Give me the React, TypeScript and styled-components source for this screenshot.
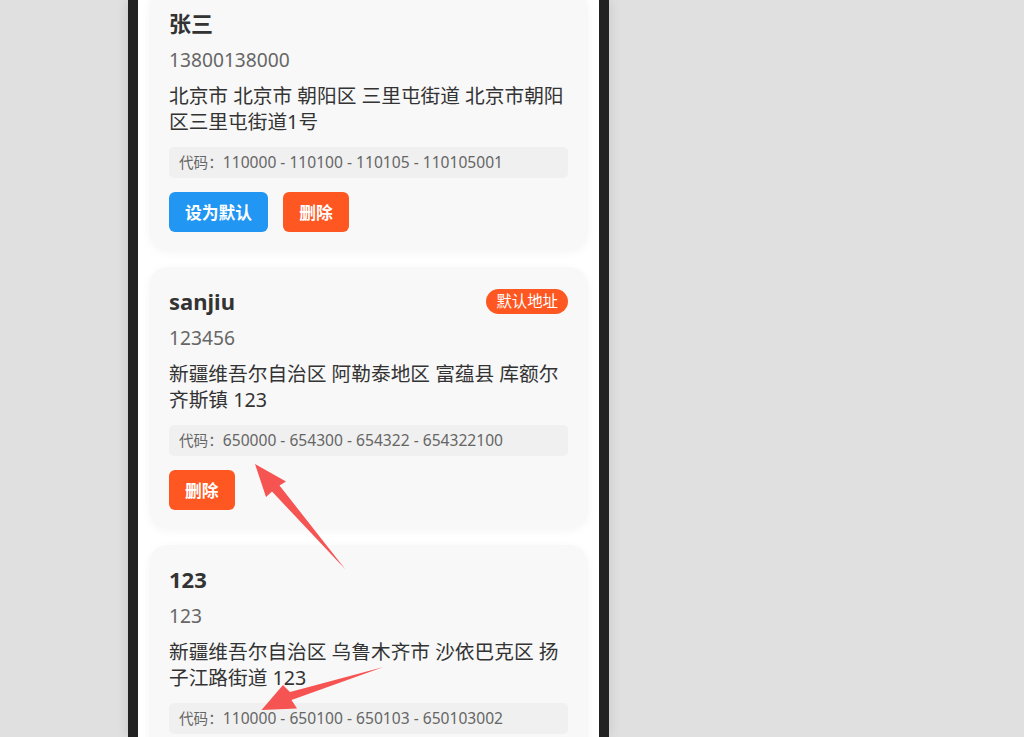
import styled, { createGlobalStyle } from 'styled-components';

type Address = {
	id: number;
	name: string;
	phone: string;
	detail: string;
	codes: string;
	isDefault?: boolean;
};

const ADDRESS_LIST: Address[] = [
	{
		id: 1,
		name: '张三',
		phone: '13800138000',
		detail: '北京市 北京市 朝阳区 三里屯街道 北京市朝阳区三里屯街道1号',
		codes: '110000 - 110100 - 110105 - 110105001',
	},
	{
		id: 2,
		name: 'sanjiu',
		phone: '123456',
		detail: '新疆维吾尔自治区 阿勒泰地区 富蕴县 库额尔齐斯镇 123',
		codes: '650000 - 654300 - 654322 - 654322100',
		isDefault: true,
	},
	{
		id: 3,
		name: '123',
		phone: '123',
		detail: '新疆维吾尔自治区 乌鲁木齐市 沙依巴克区 扬子江路街道 123',
		codes: '110000 - 650100 - 650103 - 650103002',
	},
];

const GlobalStyle = createGlobalStyle`
	* {
		box-sizing: border-box;
	}
	body {
		margin: 0;
		background: #e0e0e0;
		font-family: 'Noto Sans', 'Noto Sans CJK SC', sans-serif;
		overflow: hidden;
	}
`;

const App = () => {
	return (
		<Page>
			<GlobalStyle />
			<PhoneFrame>
				<Screen>
					<AddressList>
						{ADDRESS_LIST.map((item) => (
							<AddressCard key={item.id}>
								<CardHeader>
									<Name>{item.name}</Name>
									{item.isDefault && <DefaultTag>默认地址</DefaultTag>}
								</CardHeader>
								<Phone>{item.phone}</Phone>
								<Detail>{item.detail}</Detail>
								<CodeBox>
									<CodeLabel>代码：</CodeLabel>
									{item.codes}
								</CodeBox>
								<ButtonRow>
									{!item.isDefault && <ActionButton $variant="primary">设为默认</ActionButton>}
									<ActionButton $variant="danger">删除</ActionButton>
								</ButtonRow>
							</AddressCard>
						))}
					</AddressList>
				</Screen>
			</PhoneFrame>

			{/* annotation arrows drawn over the screenshot */}
			<Annotations viewBox="0 0 1024 737">
				<polygon points="255,464 286,481.5 279.5,485.5 345.5,569.5 272,491.5 266,497" />
				<polygon points="261.5,710 283,685 290,692 383.5,667 291.5,700 297,708.5" />
			</Annotations>
		</Page>
	);
};
export default App;

const Page = styled.div`
	position: relative;
	width: 1024px;
	height: 737px;
	padding-left: 128px;
	overflow: hidden;
`;

const PhoneFrame = styled.div`
	width: 481px;
	height: 100%;
	border-left: 10px solid #222;
	border-right: 10px solid #222;
	background: #fff;
	box-shadow: 0 0 12px rgba(0, 0, 0, 0.12);
`;

const Screen = styled.div`
	height: 100%;
	overflow: hidden;
	padding: 0 11px;
`;

const AddressList = styled.div`
	display: flex;
	flex-direction: column;
	gap: 16px;
	margin-top: -11px;
`;

const AddressCard = styled.div`
	background: #f8f8f8;
	border-radius: 19px;
	padding: 19px 20px 19px;
	box-shadow: 0 2px 10px rgba(0, 0, 0, 0.04);
`;

const CardHeader = styled.div`
	display: flex;
	align-items: center;
	justify-content: space-between;
	margin-bottom: 8px;
`;

const Name = styled.div`
	font-size: 22px;
	line-height: 30px;
	font-weight: 700;
	color: #333;
`;

const DefaultTag = styled.span`
	height: 25px;
	padding: 0 10px;
	border-radius: 13px;
	background: #ff5722;
	color: #fff;
	font-size: 15.4px;
	line-height: 25px;
`;

const Phone = styled.div`
	font-size: 19.2px;
	line-height: 27px;
	color: #666;
	margin-bottom: 10px;
`;

const Detail = styled.div`
	font-size: 19.7px;
	line-height: 26px;
	color: #333;
	margin-bottom: 12px;
`;

const CodeBox = styled.div`
	background: #f0f0f0;
	border-radius: 5px;
	padding: 6px 10px;
	font-size: 15.6px;
	line-height: 19px;
	color: #666;
	margin-bottom: 14px;
	white-space: nowrap;
`;

const CodeLabel = styled.span`
	font-size: 14.6px;
`;

const ButtonRow = styled.div`
	display: flex;
	gap: 15px;
`;

const ActionButton = styled.button<{ $variant: 'primary' | 'danger' }>`
	height: 40px;
	padding: 0 16px;
	border: none;
	border-radius: 6px;
	background: ${({ $variant }) => ($variant === 'primary' ? '#2196f3' : '#ff5722')};
	color: #fff;
	font-family: inherit;
	font-size: 16.8px;
	font-weight: 700;
	cursor: pointer;
`;

const Annotations = styled.svg`
	position: absolute;
	left: 0;
	top: 0;
	width: 1024px;
	height: 737px;
	pointer-events: none;
	fill: #f65353;
`;
